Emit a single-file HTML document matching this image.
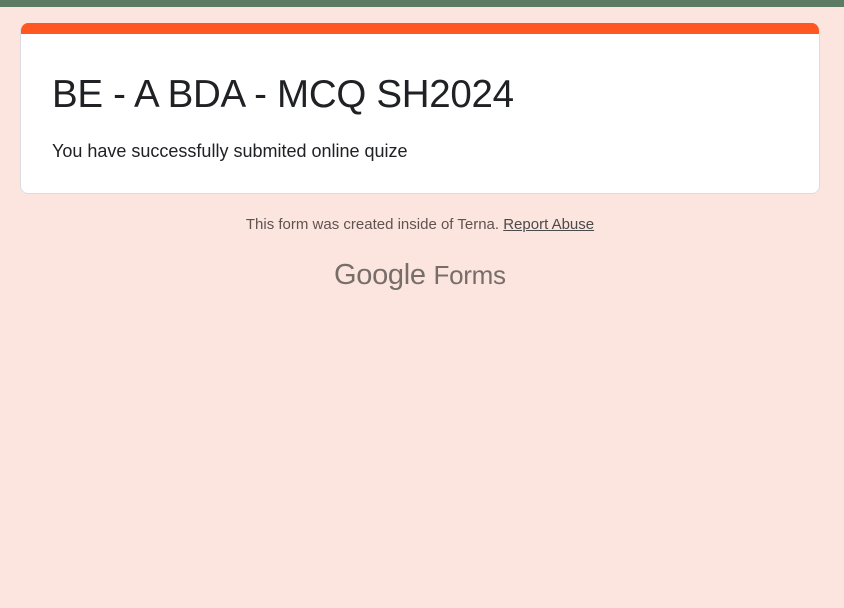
<!DOCTYPE html>
<html><head><style>
body{margin:0;background:#fde5df;font-family:"Liberation Sans",Arial,sans-serif;width:844px;height:608px;overflow:hidden;position:relative}
.top{position:absolute;left:0;top:0;width:844px;height:7px;background:#5d7a62}
.card{position:absolute;left:20px;top:23px;width:798px;height:170px;background:#fff;border:1px solid #dadce0;border-top:none;border-radius:8px;overflow:hidden}
.bar{height:11px;background:#ff5722}
h1{position:absolute;left:31px;top:50px;margin:0;font-weight:400;font-size:38.5px;color:#202124;letter-spacing:-0.3px}
p{position:absolute;left:31px;top:118px;margin:0;font-size:18px;color:#202124}
.foot{position:absolute;top:216px;left:0;width:840px;text-align:center;font-size:15px;color:#5f5350}
.foot u{color:#4a4a4a}
.logo{position:absolute;top:259px;left:334px;font-size:29px;color:#776e6a;letter-spacing:-0.3px}
</style></head><body>
<div class="top"></div>
<div class="card"><div class="bar"></div>
<h1>BE - A BDA - MCQ SH2024</h1>
<p>You have successfully submited online quize</p></div>
<div class="foot">This form was created inside of Terna. <u>Report Abuse</u></div>
<div class="logo">Google <span style="font-size:26px">Forms</span></div>
</body></html>
